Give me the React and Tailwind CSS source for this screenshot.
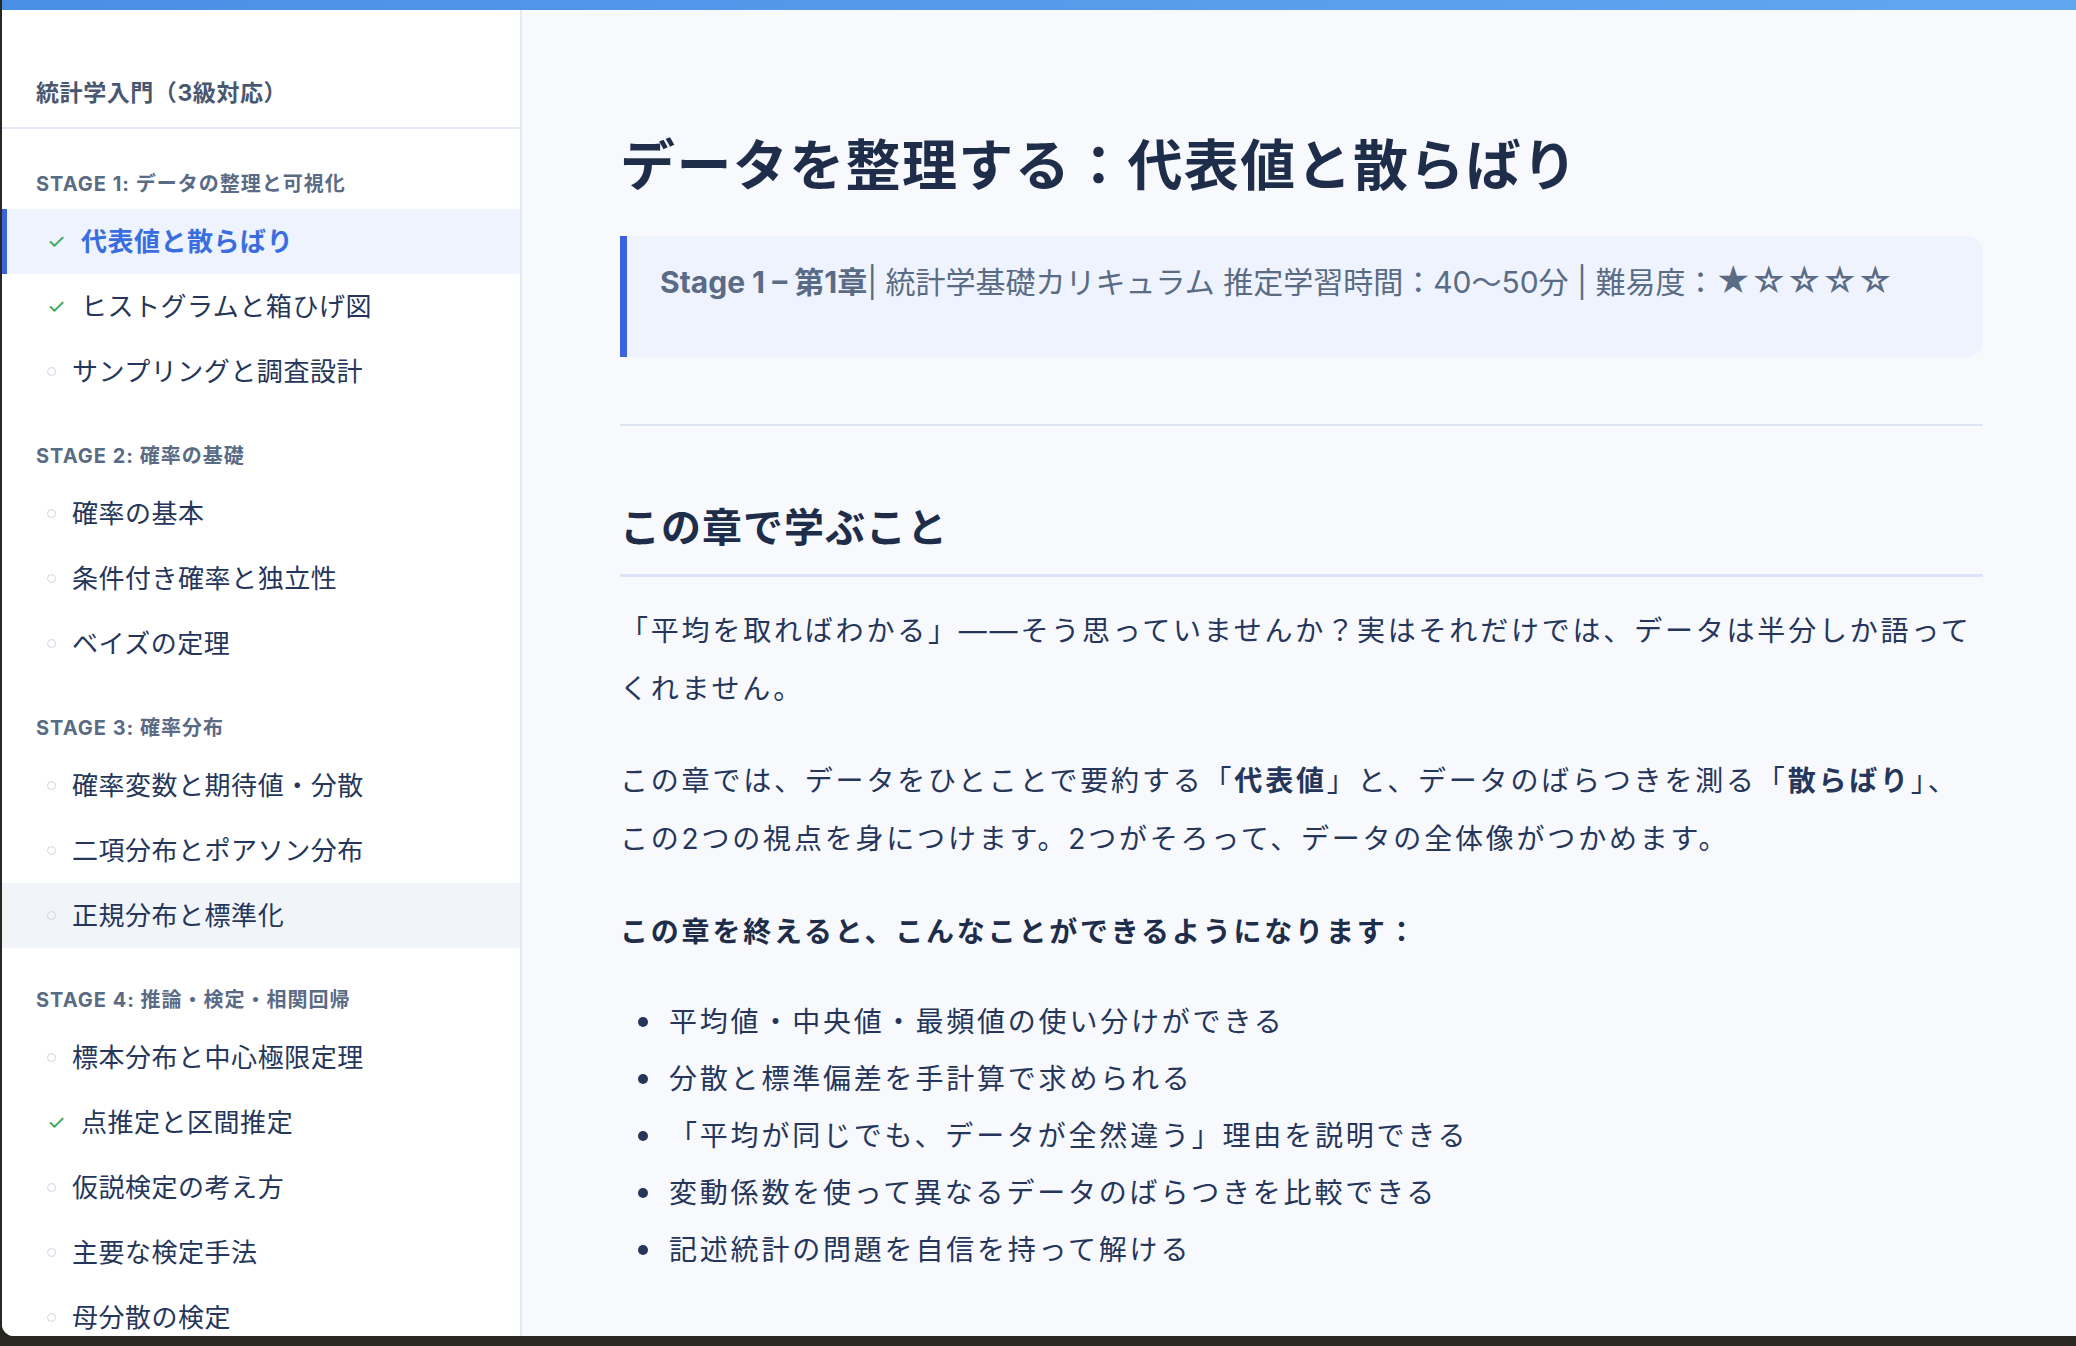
import React from "react";

const F = { fontFamily: "Inter, 'Noto Sans CJK JP', sans-serif" };

const groups = [
  { t: "STAGE 1: データの整理と可視化", items: [["代表値と散らばり", "active"], ["ヒストグラムと箱ひげ図", "done"], ["サンプリングと調査設計", ""]] },
  { t: "STAGE 2: 確率の基礎", items: [["確率の基本", ""], ["条件付き確率と独立性", ""], ["ベイズの定理", ""]] },
  { t: "STAGE 3: 確率分布", items: [["確率変数と期待値・分散", ""], ["二項分布とポアソン分布", ""], ["正規分布と標準化", "hover"]] },
  { t: "STAGE 4: 推論・検定・相関回帰", items: [["標本分布と中心極限定理", ""], ["点推定と区間推定", "done"], ["仮説検定の考え方", ""], ["主要な検定手法", ""], ["母分散の検定", ""]] },
];

function Item({ label, st }) {
  const check = st === "active" || st === "done";
  return (
    <div className={`h-[65px] flex items-center ${st === "active" ? "bg-[#eef3fd] border-l-[5px] border-[#3b63e0] pl-[40px]" : st === "hover" ? "bg-[#f1f4f9] pl-[45px]" : "pl-[45px]"}`}>
      {check ? (
        <span className="text-[#3aa657] text-[21px] w-[34px]">✓</span>
      ) : (
        <span className="w-[25px] flex"><span className="w-[9px] h-[9px] rounded-full border border-[#cfd5de]"></span></span>
      )}
      <span className={`text-[26px] tracking-[0.02em] ${st === "active" ? "text-[#3a6ee0] font-bold" : "text-[#25365a]"}`}>{label}</span>
    </div>
  );
}

export default function App() {
  const bullets = ["平均値・中央値・最頻値の使い分けができる", "分散と標準偏差を手計算で求められる", "「平均が同じでも、データが全然違う」理由を説明できる", "変動係数を使って異なるデータのばらつきを比較できる", "記述統計の問題を自信を持って解ける"];
  return (
    <div className="w-[2076px] h-[1346px] bg-[#2a2622] pl-[2px]" style={F}>
      <div className="h-[1336px] rounded-bl-xl overflow-hidden flex flex-col bg-[#f7f9fd]">
        <div className="h-[10px] bg-gradient-to-r from-[#4a8fe6] to-[#63a6f0] shrink-0"></div>
        <div className="flex flex-1 min-h-0">
          <aside className="w-[520px] shrink-0 bg-white border-r-2 border-[#e3eaf7] overflow-hidden">
            <div className="h-[119px] pt-[70px] pl-[34px] border-b-2 border-[#e3eaf7]">
              <div className="leading-[26px] text-[23px] font-bold text-[#4a5770] tracking-wide">統計学入門（3級対応）</div>
            </div>
            {groups.map((g, i) => (
              <div key={i}>
                <div className={`${i === 0 ? "h-[80px] pt-[43px]" : "h-[77px] pt-[40px]"} pl-[34px] leading-[25px] text-[20px] font-bold text-[#5a6b85] tracking-wider`}>{g.t}</div>
                {g.items.map(([l, s]) => <Item key={l} label={l} st={s} />)}
              </div>
            ))}
          </aside>
          <main className="flex-1 pl-[98px] pr-[93px] pt-[122px] text-[#25365a]">
            <h1 className="text-[55px] leading-[66px] font-bold text-[#1e2d4a] tracking-wide">データを整理する：代表値と散らばり</h1>
            <div className="mt-[38px] h-[121px] bg-[#eef3fd] border-l-[7px] border-[#3b63e0] rounded-r-2xl pt-[30px] pl-[33px] text-[30px] leading-[30px] text-[#5a6b85] whitespace-nowrap">
              <b>Stage 1 – 第1章</b>| 統計学基礎カリキュラム 推定学習時間：40〜50分 | 難易度：<span className="text-[34px]">★☆☆☆☆</span>
            </div>
            <div className="mt-[67px] border-t-2 border-[#dde5f3]"></div>
            <h2 className="mt-[78px] text-[40px] leading-[48px] font-bold text-[#1e2d4a] pb-[22px] border-b-[3px] border-[#dbe4f6] tracking-wide">この章で学ぶこと</h2>
            <p className="mt-[25px] text-[28px] leading-[58px] tracking-[0.1em]">「平均を取ればわかる」——そう思っていませんか？実はそれだけでは、データは半分しか語ってくれません。</p>
            <p className="mt-[34px] text-[28px] leading-[58px] tracking-[0.1em]">この章では、データをひとことで要約する「<b>代表値</b>」と、データのばらつきを測る「<b>散らばり</b>」、この2つの視点を身につけます。2つがそろって、データの全体像がつかめます。</p>
            <p className="mt-[35px] text-[28px] leading-[58px] tracking-[0.1em] font-bold text-[#1e2d4a]">この章を終えると、こんなことができるようになります：</p>
            <ul className="mt-[32px]">
              {bullets.map(b => (
                <li key={b} className="flex items-center h-[57px] text-[28px] tracking-[0.1em]">
                  <span className="w-[10px] h-[10px] rounded-full bg-[#25365a] ml-[18px] mr-[21px]"></span>{b}
                </li>
              ))}
            </ul>
          </main>
        </div>
      </div>
    </div>
  );
}
